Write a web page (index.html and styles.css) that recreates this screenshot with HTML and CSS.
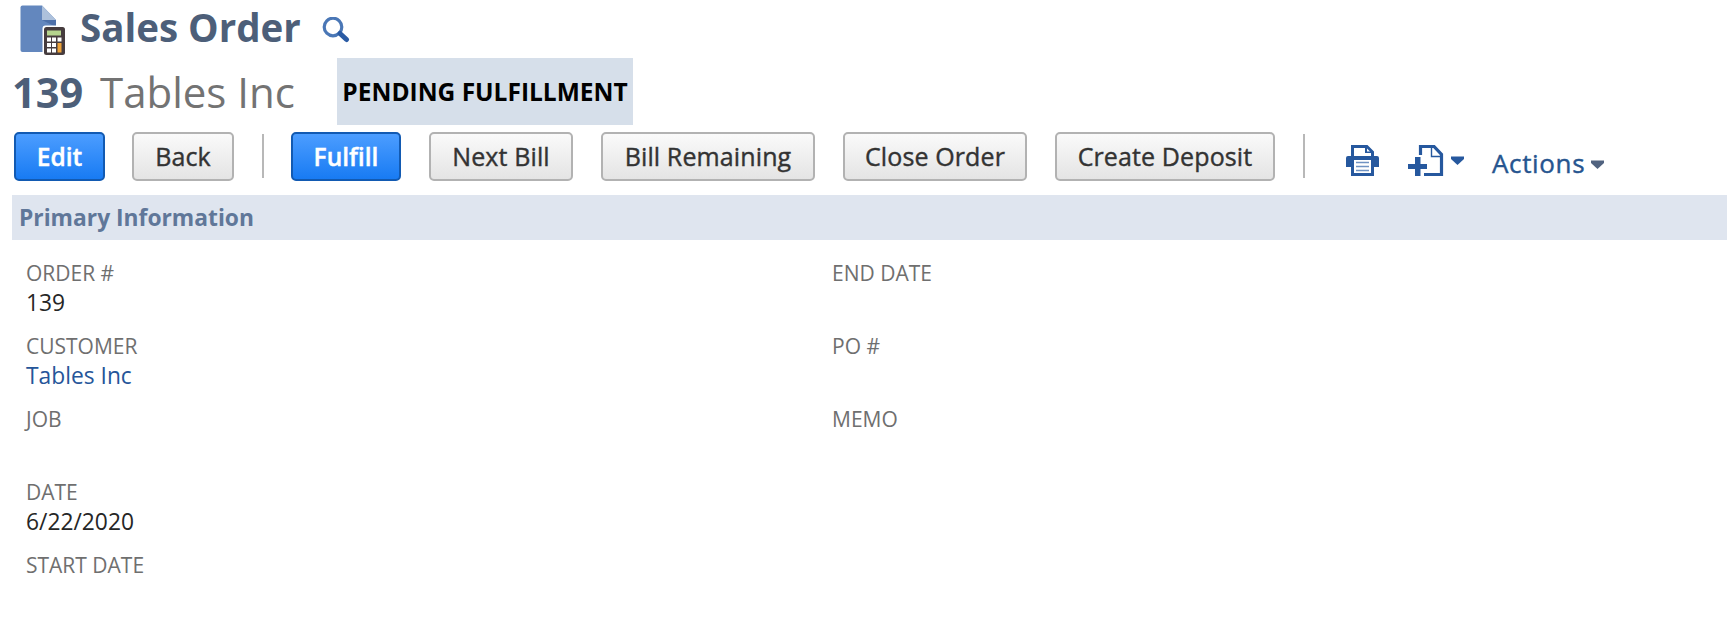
FILE: index.html
```
<!DOCTYPE html>
<html lang="en">
<head>
<meta charset="utf-8">
<title>Sales Order</title>
<link rel="stylesheet" href="styles.css">
</head>
<body>
<header class="title-row">
  <svg class="record-icon" viewBox="0 0 46 51" width="46" height="51">
    <path d="M2.500 0.500H22L36 15V47H2.500Q0.500 47 0.500 45V2.500Q0.500 0.500 2.500 0.500Z" fill="#6387be"/>
    <path d="M22 15H36V22Z" fill="#4d70a9"/>
    <path d="M22 0.500L36 15H22Z" fill="#adc1dc"/>
    <rect x="22.500" y="20.500" width="24" height="31" rx="3" fill="#fff"/>
    <rect x="24" y="22" width="21" height="28" rx="2.500" fill="#463c3e"/>
    <rect x="27" y="25.500" width="14" height="5" fill="#b5d48d"/>
    <g fill="#fff">
      <rect x="27" y="32.500" width="4" height="4"/><rect x="32" y="32.500" width="4" height="4"/><rect x="37.500" y="32.500" width="4" height="4"/>
      <rect x="27" y="38" width="4" height="4"/><rect x="32" y="38" width="4" height="4"/>
      <rect x="27" y="43.500" width="4" height="4"/><rect x="32" y="43.500" width="4" height="4"/>
    </g>
    <rect x="37.500" y="38" width="4" height="9.500" fill="#eda238"/>
  </svg>
  <h1 class="title">Sales Order</h1>
  <svg class="search-icon" viewBox="0 0 28 26" width="28" height="26">
    <circle cx="11" cy="10" r="8.800" fill="none" stroke="#4a77b6" stroke-width="3.200"/>
    <path d="M18 16.500L24.500 22.500" stroke="#2a5ba4" stroke-width="5" stroke-linecap="round"/>
  </svg>
</header>
<div class="record-row">
  <span class="record-id">139</span>
  <span class="record-name">Tables Inc</span>
  <span class="status">PENDING FULFILLMENT</span>
</div>
<nav class="toolbar">
  <button class="btn primary edit">Edit</button>
  <button class="btn back">Back</button>
  <i class="divider"></i>
  <button class="btn primary fulfill">Fulfill</button>
  <button class="btn next">Next Bill</button>
  <button class="btn remaining">Bill Remaining</button>
  <button class="btn close">Close Order</button>
  <button class="btn deposit">Create Deposit</button>
  <i class="divider"></i>
  <svg class="print-icon" viewBox="0 0 33 31" width="33" height="31">
    <path d="M5 11V0H21.500L28 6.500V11H31Q33 11 33 13V22H28V31H5V22H0V13Q0 11 2 11Z" fill="#26589e"/>
    <path d="M8 3H19V8H25V11H8Z" fill="#fff"/>
    <path d="M21 3.500V6.500H24Z" fill="#fff"/>
    <rect x="8" y="15" width="17" height="13" fill="#fff"/>
    <path d="M10 17.500H23M10 21.500H23M10 25.500H23" stroke="#6f92c2" stroke-width="1.400"/>
  </svg>
  <svg class="new-icon" viewBox="0 0 36 31" width="36" height="31">
    <path d="M12.500 10V1.500H26L33.500 9.500V29.500H16" fill="none" stroke="#26589e" stroke-width="3.200"/>
    <path d="M23.500 2V11.500H34" fill="none" stroke="#26589e" stroke-width="1.400"/>
    <path d="M7 12H12.500V19H19V24H12.500V31H7V24H0V19H7Z" fill="#26589e"/>
  </svg>
  <svg class="caret" viewBox="0 0 13 9" width="13" height="9"><path d="M0 0.500H13V3L6.500 9L0 3Z" fill="#26589e"/></svg>
  <a class="actions">Actions</a>
  <svg class="caret grey" viewBox="0 0 13 9" width="13" height="9"><path d="M0 0.500H13V3L6.500 9L0 3Z" fill="#50627f"/></svg>
</nav>
<section>
  <h2 class="section-title">Primary Information</h2>
  <div class="fields">
    <div class="column">
      <div class="field"><span class="label">ORDER #</span><span class="value">139</span></div>
      <div class="field"><span class="label">CUSTOMER</span><a class="value link">Tables Inc</a></div>
      <div class="field"><span class="label">JOB</span></div>
      <div class="field"><span class="label">DATE</span><span class="value">6/22/2020</span></div>
      <div class="field"><span class="label">START DATE</span></div>
    </div>
    <div class="column">
      <div class="field"><span class="label">END DATE</span></div>
      <div class="field"><span class="label">PO #</span></div>
      <div class="field"><span class="label">MEMO</span></div>
    </div>
  </div>
</section>
</body>
</html>
```
FILE: styles.css
```
* { box-sizing: border-box; }
body {
  margin: 0;
  height: 639px;
  overflow: hidden;
  background: #fff;
  font-family: "Open Sans", sans-serif;
  color: #262626;
  white-space: nowrap;
}
.title-row { display: flex; height: 58px; padding-left: 20px; align-items: flex-start; }
.record-icon { margin-top: 5px; }
.title { margin: 0 0 0 14px; width: 242px; font-size: 38.500px; line-height: 54px; font-weight: 700; color: #4d5f79; }
.search-icon { margin-top: 17px; }
.record-row { display: flex; height: 67px; padding-left: 12px; line-height: 69px; }
.record-id { width: 88px; font-size: 41.500px; line-height: 68px; font-weight: 700; color: #4d5f79; }
.record-name { width: 237px; font-size: 42px; line-height: 68px; font-weight: 400; color: #737373; }
.status { width: 296px; background: #d6dfea; text-align: center; font-size: 24.500px; font-weight: 700; line-height: 68px; color: #000; }
.toolbar { display: flex; height: 70px; padding: 7px 0 0 14px; align-items: flex-start; }
.btn {
  flex: none;
  height: 49px;
  padding: 0;
  border: 2px solid #b2b2b2;
  border-radius: 5px;
  background: linear-gradient(#fafafa, #e4e4e4);
  font: 400 25px/45px "Open Sans", sans-serif;
  letter-spacing: 0.120px;
  -webkit-text-stroke: 0.400px currentColor;
  color: #333;
}
.btn.primary {
  border-color: #125ab2;
  background: linear-gradient(#4c9dff, #187bf3);
  font-weight: 600;
  font-size: 24.500px;
  letter-spacing: 0;
  color: #fff;
}
.edit { width: 91px; margin-right: 27px; }
.back { width: 102px; }
.fulfill { width: 110px; margin-right: 28px; }
.next { width: 144px; margin-right: 28px; }
.remaining { width: 214px; margin-right: 28px; }
.close { width: 184px; margin-right: 28px; }
.deposit { width: 220px; }
.divider { width: 2px; height: 44px; margin: 2px 27px 0 28px; background: #b8b8b8; }
.print-icon { margin: 13px 29px 0 14px; }
.new-icon { margin: 13px 7px 0 0; }
.caret { margin-top: 24px; }
.actions {
  width: 99px;
  margin-left: 28px;
  padding-top: 14px;
  font-size: 26px;
  line-height: 34px;
  letter-spacing: 0.650px;
  -webkit-text-stroke: 0.400px currentColor;
  color: #26558f;
}
.caret.grey { margin-top: 28px; }
.section-title { margin: 0 0 0 12px; height: 45px; padding-left: 7px; background: #dfe5ef; font-size: 22.800px; line-height: 45px; font-weight: 700; color: #607799; }
.fields { display: flex; padding: 19px 0 0 26px; }
.column { width: 806px; }
.field { display: flex; flex-direction: column; height: 73px; }
.label { font-size: 21px; line-height: 28px; color: #6f6f6f; }
.value { font-size: 22.800px; line-height: 32px; color: #262626; }
.value.link { color: #255599; }
```
